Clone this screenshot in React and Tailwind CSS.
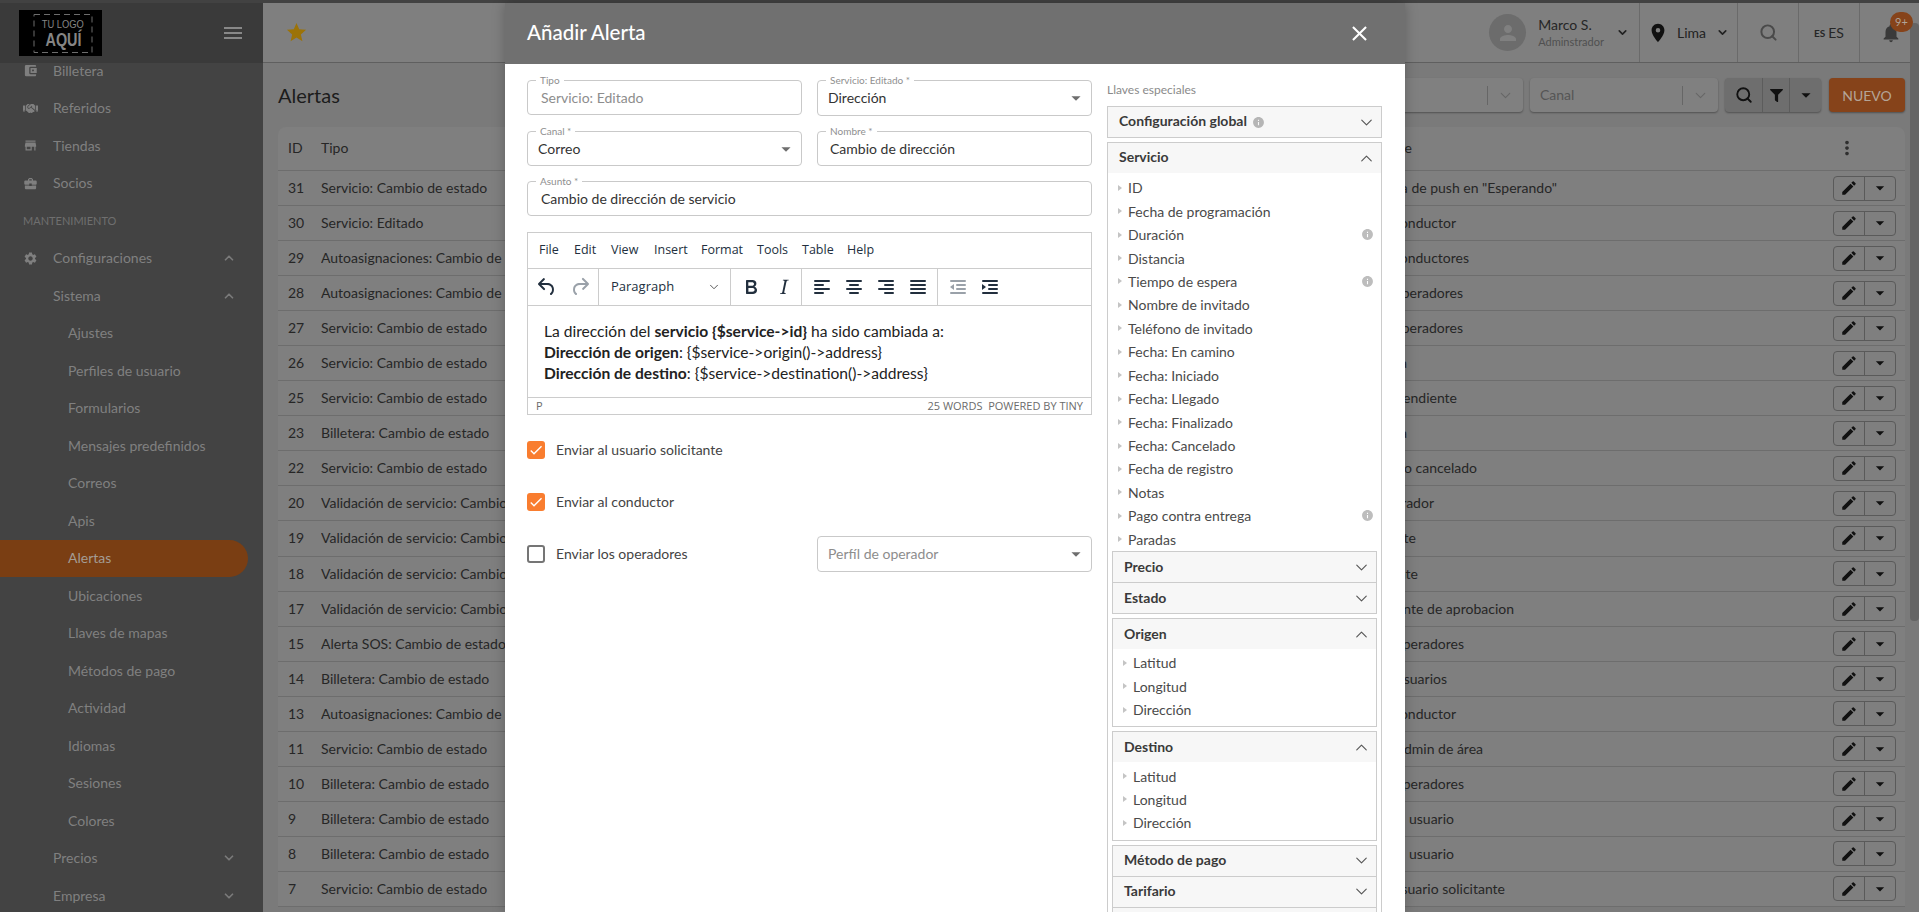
import React from 'react';
import { ChevronDown, ChevronUp } from 'lucide-react';
import { FaHandshake } from 'react-icons/fa';
import {
  MdAccountBalanceWallet, MdStore, MdBusinessCenter, MdSettings, MdMenu, MdStar, MdPerson,
  MdLocationOn, MdNotifications, MdEdit, MdInfo, MdArrowDropDown, MdMoreVert, MdClose, MdCheck,
} from 'react-icons/md';
import { FiSearch } from 'react-icons/fi';
import { FaFilter } from 'react-icons/fa';

const navItems = [
  { t: 'Billetera', icon: MdAccountBalanceWallet, lvl: 0 },
  { t: 'Referidos', icon: FaHandshake, lvl: 0 },
  { t: 'Tiendas', icon: MdStore, lvl: 0 },
  { t: 'Socios', icon: MdBusinessCenter, lvl: 0 },
  { t: 'MANTENIMIENTO', section: true },
  { t: 'Configuraciones', icon: MdSettings, lvl: 0, chev: 'up' },
  { t: 'Sistema', lvl: 1, chev: 'up' },
  { t: 'Ajustes', lvl: 2 },
  { t: 'Perfiles de usuario', lvl: 2 },
  { t: 'Formularios', lvl: 2 },
  { t: 'Mensajes predefinidos', lvl: 2 },
  { t: 'Correos', lvl: 2 },
  { t: 'Apis', lvl: 2 },
  { t: 'Alertas', lvl: 2, active: true },
  { t: 'Ubicaciones', lvl: 2 },
  { t: 'Llaves de mapas', lvl: 2 },
  { t: 'Métodos de pago', lvl: 2 },
  { t: 'Actividad', lvl: 2 },
  { t: 'Idiomas', lvl: 2 },
  { t: 'Sesiones', lvl: 2 },
  { t: 'Colores', lvl: 2 },
  { t: 'Precios', lvl: 1, chev: 'down' },
  { t: 'Empresa', lvl: 1, chev: 'down' },
];

const rows = [
  [31, 'Servicio: Cambio de estado', 'Alerta de push en "Esperando"', 1557],
  [30, 'Servicio: Editado', 'Notifica al conductor', 1456],
  [29, 'Autoasignaciones: Cambio de estado', 'Notifica a conductores', 1469],
  [28, 'Autoasignaciones: Cambio de estado', 'Notifica a operadores', 1463],
  [27, 'Servicio: Cambio de estado', 'Notifica a operadores', 1463],
  [26, 'Servicio: Cambio de estado', 'Notifica', 1407],
  [25, 'Servicio: Cambio de estado', 'Notifica pendiente', 1457],
  [23, 'Billetera: Cambio de estado', 'Notifica', 1407],
  [22, 'Servicio: Cambio de estado', 'Servicio cancelado', 1477],
  [20, 'Validación de servicio: Cambio de estado', 'Al operador', 1434],
  [19, 'Validación de servicio: Cambio de estado', 'Notifica a solicitante', 1416],
  [18, 'Validación de servicio: Cambio de estado', 'Notifica a solicitante', 1418],
  [17, 'Validación de servicio: Cambio de estado', 'Pendiente de aprobacion', 1514],
  [15, 'Alerta SOS: Cambio de estado', 'Notifica a operadores', 1464],
  [14, 'Billetera: Cambio de estado', 'Notifica a usuarios', 1447],
  [13, 'Autoasignaciones: Cambio de estado', 'Notifica al conductor', 1456],
  [11, 'Servicio: Cambio de estado', 'Notifica al admin de área', 1483],
  [10, 'Billetera: Cambio de estado', 'Notifica a operadores', 1464],
  [9, 'Billetera: Cambio de estado', 'Notifica al usuario', 1454],
  [8, 'Billetera: Cambio de estado', 'Notifica al usuario', 1454],
  [7, 'Servicio: Cambio de estado', 'Notifica al usuario solicitante', 1505],
];

const serviceKeys = [
  ['ID'], ['Fecha de programación'], ['Duración', true], ['Distancia'], ['Tiempo de espera', true],
  ['Nombre de invitado'], ['Teléfono de invitado'], ['Fecha: En camino'], ['Fecha: Iniciado'],
  ['Fecha: Llegado'], ['Fecha: Finalizado'], ['Fecha: Cancelado'], ['Fecha de registro'], ['Notas'],
  ['Pago contra entrega', true], ['Paradas'],
];

function Logo() {
  return (
    <div className="relative w-[83px] h-[46px] bg-black flex flex-col items-center justify-center leading-none text-[#858585] font-['Liberation_Sans',sans-serif]">
      <svg className="absolute inset-0" width="83" height="46" viewBox="0 0 83 46" fill="none">
        <rect x="15" y="4.5" width="58" height="38" stroke="#6d6d6d" strokeDasharray="6 4" />
      </svg>
      <span className="text-[11px] scale-x-[0.85] leading-[13px] ml-[5px]">TU LOGO</span>
      <span className="text-[18px] font-bold scale-x-[0.8] leading-[18px] ml-[5px]">AQUÍ</span>
    </div>
  );
}

function Sidebar() {
  return (
    <aside className="w-[263px] shrink-0 bg-[#434343] flex flex-col overflow-hidden">
      <div className="relative z-10 h-[60px] shrink-0 bg-[#3a3a3a] flex items-center pl-[19px] pr-[18px] justify-between">
        <Logo />
        <MdMenu size={24} className="text-[#888]" />
      </div>
      <nav className="-mt-[11px] flex flex-col">
        {navItems.map((n) => {
          if (n.section) {
            return <div key={n.t} className="h-[37.5px] flex items-center pl-[23px] text-[11px] text-[#6f6f6f]">{n.t}</div>;
          }
          const Icon = n.icon;
          return (
            <div key={n.t} className={`h-[37.5px] flex items-center relative text-[14px] ${n.active ? 'bg-[#7a3e13] rounded-r-[19px] w-[248px] text-[#a49c93]' : 'text-[#808080]'}`}>
              {n.lvl === 0 && <span className="w-[53px] pl-[23px] shrink-0"><Icon size={15} className="text-[#7f7f7f]" /></span>}
              {n.lvl === 1 && <span className="w-[53px] shrink-0" />}
              {n.lvl === 2 && <span className="w-[68px] shrink-0" />}
              <span className="pb-[1px]">{n.t}</span>
              {n.chev === 'up' && <ChevronUp size={14} strokeWidth={3} className="ml-auto mr-[27px] text-[#7a7a7a]" />}
              {n.chev === 'down' && <ChevronDown size={14} strokeWidth={3} className="ml-auto mr-[27px] text-[#7a7a7a]" />}
            </div>
          );
        })}
      </nav>
    </aside>
  );
}

function TopBar() {
  return (
    <header className="h-[60px] shrink-0 bg-[#7f7f7f] border-b border-[#5f5f5f] flex items-center pl-[22px]">
      <MdStar size={23} className="text-[#9c7308]" />
      <div className="ml-auto flex h-full">
        <div className="flex items-center pr-[10px]">
          <div className="w-[37px] h-[37px] rounded-full bg-[#6c6c6c] flex items-center justify-center"><MdPerson size={24} className="text-[#808080]" /></div>
          <div className="ml-[12px] flex flex-col leading-none">
            <span className="text-[14px] text-[#262626] leading-[18px]">Marco S.</span>
            <span className="text-[11px] text-[#505050] leading-[16px]">Adminstrador</span>
          </div>
          <ChevronDown size={13} strokeWidth={3} className="ml-[12px] text-[#222]" />
        </div>
        <div className="w-[98px] border-l border-[#6a6a6a] flex items-center pl-[7px]">
          <MdLocationOn size={22} className="text-[#111]" />
          <span className="ml-[8px] text-[14px] text-[#222]">Lima</span>
          <ChevronDown size={13} strokeWidth={3} className="ml-[10px] text-[#222]" />
        </div>
        <div className="w-[61px] border-l border-[#6a6a6a] flex items-center justify-center">
          <FiSearch size={19} strokeWidth={2.5} className="text-[#4a4a4a]" />
        </div>
        <div className="w-[61px] border-l border-[#6a6a6a] flex items-center justify-center text-[#262626]">
          <span className="text-[10px] font-bold mr-[3px] mt-[2px]">ES</span><span className="text-[14px]">ES</span>
        </div>
        <div className="w-[60px] border-l border-[#6a6a6a] flex items-center pl-[20px]">
          <MdNotifications size={22} className="text-[#3a3a3a]" />
        </div>
      </div>
    </header>
  );
}

function Filter({ label, className }) {
  return (
    <div className={`h-[34px] rounded-[4px] bg-[#808080] shadow-[0_1px_2px_rgba(0,0,0,0.35)] flex items-center text-[14px] text-[#555] ${className}`}>
      <span className="pl-[10px] pb-[1px] flex-1">{label}</span>
      <span className="w-px h-[19px] bg-[#666]" />
      <ChevronDown size={17} strokeWidth={1.5} className="mx-[9px] text-[#666]" />
    </div>
  );
}

function Toolbar() {
  return (
    <div className="flex items-center justify-end gap-[7px] h-[34px]">
      <Filter label="" className="w-[260px]" />
      <Filter label="Canal" className="w-[188px]" />
      <div className="flex h-[34px] w-[96px] rounded-[4px] overflow-hidden bg-[#6e6e6e] shadow-[0_1px_2px_rgba(0,0,0,0.35)]">
        <div className="w-[38px] flex items-center justify-center border-r border-[#5c5c5c]"><FiSearch size={18} strokeWidth={2.5} className="text-[#111]" /></div>
        <div className="w-[27px] flex items-center justify-center border-r border-[#5c5c5c]"><FaFilter size={13} className="text-[#111]" /></div>
        <div className="flex-1 flex items-center justify-center"><MdArrowDropDown size={22} className="text-[#111]" /></div>
      </div>
      <div className="ml-px w-[76px] h-[34px] rounded-[4px] bg-[#86431a] shadow-[0_1px_2px_rgba(0,0,0,0.35)] flex items-center justify-center text-[14px] text-[#b5a597]">NUEVO</div>
    </div>
  );
}

function Table() {
  return (
    <section className="mt-[15px] bg-[#7f7f7f] rounded-t-[8px] text-[14px] text-[#262626]">
      <div className="h-[44px] flex items-center border-b border-[#6d6d6d] pb-[2px]">
        <span className="w-[43px] pl-[10px] shrink-0">ID</span>
        <span className="w-[184px] shrink-0">Tipo</span>
        <span className="text-right w-[907px] shrink-0">Nombre</span>
        <span className="ml-auto mr-[9px] w-[63px] pl-[3px]"><MdMoreVert size={22} className="text-[#2f2f2f]" /></span>
      </div>
      {rows.map((r) => (
        <div key={r[0]} className="h-[35.05px] flex items-center border-b border-[#6d6d6d]">
          <span className="w-[43px] pl-[10px] pb-[1px] shrink-0">{r[0]}</span>
          <span className="w-[184px] pb-[1px] shrink-0 whitespace-nowrap overflow-hidden">{r[1]}</span>
          <span className="text-right pb-[1px] whitespace-nowrap shrink-0" style={{ width: r[3] - 505 }}>{r[2]}</span>
          <div className="ml-auto mr-[9px] w-[63px] h-[25px] flex border border-[#5a5a5a] rounded-[4px]">
            <div className="w-[31px] flex items-center justify-center border-r border-[#5a5a5a]"><MdEdit size={18} className="text-[#111]" /></div>
            <div className="flex-1 flex items-center justify-center"><MdArrowDropDown size={20} className="text-[#111]" /></div>
          </div>
        </div>
      ))}
    </section>
  );
}

function Outlined({ label, value, select, muted, className = '', noLabel, valueX = 'pl-[13px]', h = 'h-[35px]' }) {
  return (
    <div className={`relative ${h} border border-[#c9c9c9] rounded-[4px] flex items-center text-[14px] bg-white ${className}`}>
      {!noLabel && <span className="absolute -top-[7px] left-[8px] px-[4px] bg-white text-[10px] leading-[12px] text-[#8f8f8f]">{label}</span>}
      <span className={`${valueX} pb-[1px] ${muted ? 'text-[#8d8d8d]' : 'text-[#333]'}`}>{value}</span>
      {select && <MdArrowDropDown size={22} className="absolute right-[4px] top-[6px] text-[#6e6e6e]" />}
    </div>
  );
}

const ink = '#222f3e';
function TIcon({ d, dim }) {
  return (
    <svg width="24" height="24" viewBox="0 0 24 24" fill={dim ? '#9aa1a9' : ink}><path d={d} /></svg>
  );
}
function Lines({ w, align, dim, mark }) {
  const ys = [5, 9, 13, 17];
  return (
    <svg width="24" height="24" viewBox="0 0 24 24" fill={dim ? '#9aa1a9' : ink}>
      {ys.map((y, i) => {
        const width = w[i];
        const x = align === 'c' ? 12 - width / 2 : align === 'r' ? 20 - width : 4;
        return <rect key={y} x={x} y={y} width={width} height="2" rx="1" />;
      })}
      {mark === 'in' && <path d="M4 9l4 3-4 3z" />}
      {mark === 'out' && <path d="M8 9l-4 3 4 3z" />}
    </svg>
  );
}

function Editor() {
  const menu = [
    ['File', 'w-[35px]'], ['Edit', 'w-[37px]'], ['View', 'w-[43px]'], ['Insert', 'w-[47px]'],
    ['Format', 'w-[56px]'], ['Tools', 'w-[45px]'], ['Table', 'w-[45px]'], ['Help', 'w-[40px]'],
  ];
  return (
    <div className="mt-[16px] border border-[#cccccc] flex flex-col h-[183px]">
      <div className="h-[35px] flex items-center pl-[11px] text-[12.5px] text-[#222f3e] font-['Open_Sans',sans-serif] shrink-0">
        {menu.map(([m, w]) => <span key={m} className={w}>{m}</span>)}
      </div>
      <div className="h-[38px] border-y border-[#cccccc] flex items-stretch shrink-0">
        <div className="w-[71px] flex items-center pl-[7px] gap-[9px] border-r border-[#cccccc]">
          <TIcon d="M6.4 8H12c3.7 0 6.2 2 6.8 5.1.6 2.7-.4 5.6-2.3 6.8a1 1 0 0 1-1-1.8c1.1-.7 1.8-2.7 1.4-4.6-.5-2.1-2.1-3.5-4.9-3.5H6.4l3.3 3.3a1 1 0 1 1-1.4 1.4l-5-5a1 1 0 0 1 0-1.4l5-5a1 1 0 0 1 1.4 1.4L6.4 8z" />
          <TIcon dim d="M17.6 10H12c-2.8 0-4.4 1.4-4.9 3.5-.4 2 .3 3.9 1.4 4.6a1 1 0 1 1-1 1.8c-2-1.2-2.9-4.1-2.3-6.8.6-3 3-5.1 6.8-5.1h5.6l-3.3-3.3a1 1 0 1 1 1.4-1.4l5 5a1 1 0 0 1 0 1.4l-5 5a1 1 0 0 1-1.4-1.4l3.3-3.3z" />
        </div>
        <div className="w-[132px] flex items-center pl-[12px] border-r border-[#cccccc] text-[13px] text-[#222f3e] font-['Open_Sans',sans-serif]">
          <span className="flex-1">Paragraph</span>
          <ChevronDown size={14} strokeWidth={1.5} className="mr-[9px] text-[#444]" />
        </div>
        <div className="w-[71px] flex items-center pl-[8px] gap-[9px] border-r border-[#cccccc]">
          <TIcon d="M7.8 19c-.3 0-.5 0-.6-.2l-.2-.5V5.7c0-.2 0-.4.2-.5l.6-.2h5c1.5 0 2.7.3 3.5 1 .7.6 1.1 1.4 1.1 2.5a3 3 0 0 1-.6 1.9c-.4.6-1 1-1.6 1.2.4.1.9.3 1.3.6s.8.7 1 1.2c.4.4.5 1 .5 1.6 0 1.3-.4 2.3-1.3 3-.8.7-2.1 1-3.8 1H7.8zm5-8.3c.6 0 1.2-.1 1.6-.5.4-.3.6-.7.6-1.3 0-1.1-.8-1.7-2.3-1.7H9.3v3.5h3.4zm.5 6c.7 0 1.3-.1 1.7-.4.4-.4.6-.9.6-1.5s-.2-1-.7-1.4c-.4-.3-1-.4-2-.4H9.4v3.8h4z" />
          <TIcon d="M16.7 4.7l-.1.9h-.3c-.6 0-1 0-1.4.3-.3.3-.4.6-.5 1.1l-2.1 9.8v.6c0 .5.4.8 1.4.8h.2l-.2.8H8l.2-.8h.2c1.1 0 1.8-.5 2-1.5l2-9.8.1-.5c0-.6-.4-.8-1.4-.8h-.3l.2-.9h5.8z" />
        </div>
        <div className="w-[136px] flex items-center pl-[8px] gap-[8px] border-r border-[#cccccc]">
          <Lines align="l" w={[16, 10, 16, 10]} />
          <Lines align="c" w={[16, 10, 16, 10]} />
          <Lines align="r" w={[16, 10, 16, 10]} />
          <Lines align="l" w={[16, 16, 16, 16]} />
        </div>
        <div className="flex items-center pl-[8px] gap-[8px]">
          <Lines align="r" dim w={[16, 10, 10, 16]} mark="out" />
          <Lines align="r" w={[16, 10, 10, 16]} mark="in" />
        </div>
      </div>
      <div className="flex-1 pl-[16px] pt-[15px] text-[15.6px] leading-[21px] text-[#222]">
        <p>La dirección del <b>servicio {'{$service->id}'}</b> ha sido cambiada a:</p>
        <p><b>Dirección de origen</b>: {'{$service->origin()->address}'}</p>
        <p><b>Dirección de destino</b>: {'{$service->destination()->address}'}</p>
      </div>
      <div className="h-[17px] border-t border-[#cccccc] flex items-center justify-between pl-[8px] pr-[8px] text-[11px] text-[#6b6b6b] font-['Open_Sans',sans-serif] shrink-0">
        <span>P</span><span>25 WORDS&nbsp; POWERED BY TINY</span>
      </div>
    </div>
  );
}

function CheckRow({ checked, label, children }) {
  return (
    <div className="h-[36px] flex items-center">
      <div className={`w-[18px] h-[18px] rounded-[3px] flex items-center justify-center shrink-0 ${checked ? 'bg-[#f97d2f]' : 'border-2 border-[#757575]'}`}>
        {checked && <MdCheck size={16} className="text-white" />}
      </div>
      <span className="ml-[11px] pb-[2px] text-[14px] text-[#444]">{label}</span>
      {children}
    </div>
  );
}

function AccHead({ title, open, info, lift = 'pb-[1px]' }) {
  return (
    <div className="h-[30px] bg-[#f7f7f7] flex items-center pl-[11px] pr-[5px] text-[14px] font-bold text-[#3a3a3a]">
      <span className={lift}>{title}</span>
      {info && <MdInfo size={13} className="ml-[5px] mt-[1px] text-[#b5b5b5]" />}
      {open
        ? <ChevronUp size={19} strokeWidth={1.4} className="ml-auto text-[#555]" />
        : <ChevronDown size={19} strokeWidth={1.4} className="ml-auto text-[#555]" />}
    </div>
  );
}

function KeyItem({ t, info }) {
  return (
    <div className="h-[23.45px] flex items-center pl-[10px] pr-[7px] text-[14px] text-[#4a4a4a]">
      <span className="w-0 h-0 border-y-[3px] border-y-transparent border-l-[4px] border-l-[#c4c4c4] mr-[6px]" />
      <span>{t}</span>
      {info && <MdInfo size={13} className="ml-auto text-[#bdbdbd]" />}
    </div>
  );
}

function Acc({ title, items, className = '' }) {
  return (
    <div className={`mx-[4px] border border-[#cccccc] ${className}`}>
      <AccHead title={title} open={!!items} lift="pb-[2px]" />
      {items && <div className="pt-[2px] pb-[5px]">{items.map((t) => <KeyItem key={t} t={t} />)}</div>}
    </div>
  );
}

function Modal() {
  const latlon = ['Latitud', 'Longitud', 'Dirección'];
  return (
    <div className="absolute left-[505px] top-[3px] bottom-0 w-[900px] bg-white flex flex-col overflow-hidden shadow-[0_0_12px_rgba(0,0,0,0.25)]">
      <div className="h-[61px] shrink-0 bg-[#707070] flex items-center justify-between pl-[22px] pr-[33px]">
        <h2 className="text-[20.5px] pb-[2px] font-medium text-white">Añadir Alerta</h2>
        <MdClose size={25} className="text-white" />
      </div>
      <div className="flex-1 flex pl-[22px] pr-[23px] min-h-0">
        <div className="w-[565px] shrink-0 pt-[16px]">
          <div className="grid grid-cols-2 gap-x-[15px]">
            <Outlined label="Tipo" value="Servicio: Editado" muted />
            <Outlined label="Servicio: Editado *" value="Dirección" select valueX="pl-[10px]" h="h-[36px]" />
          </div>
          <div className="grid grid-cols-2 gap-x-[15px] mt-[15px]">
            <Outlined label="Canal *" value="Correo" select valueX="pl-[10px]" />
            <Outlined label="Nombre *" value="Cambio de dirección" valueX="pl-[12px]" />
          </div>
          <Outlined label="Asunto *" value="Cambio de dirección de servicio" className="mt-[15px]" />
          <Editor />
          <div className="mt-[17px] flex flex-col gap-[16px]">
            <CheckRow checked label="Enviar al usuario solicitante" />
            <CheckRow checked label="Enviar al conductor" />
            <CheckRow label="Enviar los operadores">
              <div className="ml-auto w-[275px]">
                <Outlined noLabel value="Perfíl de operador" muted select valueX="pl-[10px]" h="h-[36px]" />
              </div>
            </CheckRow>
          </div>
        </div>
        <div className="w-[275px] ml-[15px] shrink-0 flex flex-col min-h-0">
          <div className="mt-[18px] h-[16px] text-[12px] leading-[16px] text-[#8a8a8a]">Llaves especiales</div>
          <div className="mt-[8px] border border-[#cccccc]">
            <AccHead title="Configuración global" info lift="pb-[3px]" />
          </div>
          <div className="mt-[4px] flex-1 border-x border-t border-[#cccccc]">
            <AccHead title="Servicio" open lift="pb-[3px]" />
            <div className="pt-[3px]">
              {serviceKeys.map(([t, info]) => <KeyItem key={t} t={t} info={info} />)}
            </div>
            <Acc title="Precio" />
            <Acc title="Estado" className="-mt-px" />
            <Acc title="Origen" items={latlon} className="mt-[4px]" />
            <Acc title="Destino" items={latlon} className="mt-[4px]" />
            <Acc title="Método de pago" className="mt-[4px]" />
            <Acc title="Tarifario" className="-mt-px" />
            <Acc title="Cupón" className="-mt-px" />
          </div>
        </div>
      </div>
    </div>
  );
}

export default function App() {
  return (
    <div className="relative w-[1919px] h-[912px] overflow-hidden bg-[#424242] font-['Lato',sans-serif] flex flex-col">
      <div className="h-[3px] shrink-0 bg-[#424242]" />
      <div className="flex flex-1 min-h-0">
        <Sidebar />
        <main className="flex-1 min-w-0 bg-[#7a7a7a] flex flex-col">
          <TopBar />
          <div className="pt-[15px] pl-[15px] pr-[14px]">
            <div className="h-[34px] flex items-center justify-between">
              <h1 className="text-[20px] pb-[1px] text-[#1c1c1c]">Alertas</h1>
              <Toolbar />
            </div>
            <Table />
          </div>
        </main>
      </div>
      <div className="absolute right-0 top-[23px] w-[9px] h-[598px] rounded-[4px] bg-[#656565]" />
      <div className="absolute left-[1890px] top-[12px] w-[23px] h-[20px] rounded-full bg-[#86431a] flex items-center justify-center text-[11px] text-[#b0a498]">9+</div>
      <Modal />
    </div>
  );
}
